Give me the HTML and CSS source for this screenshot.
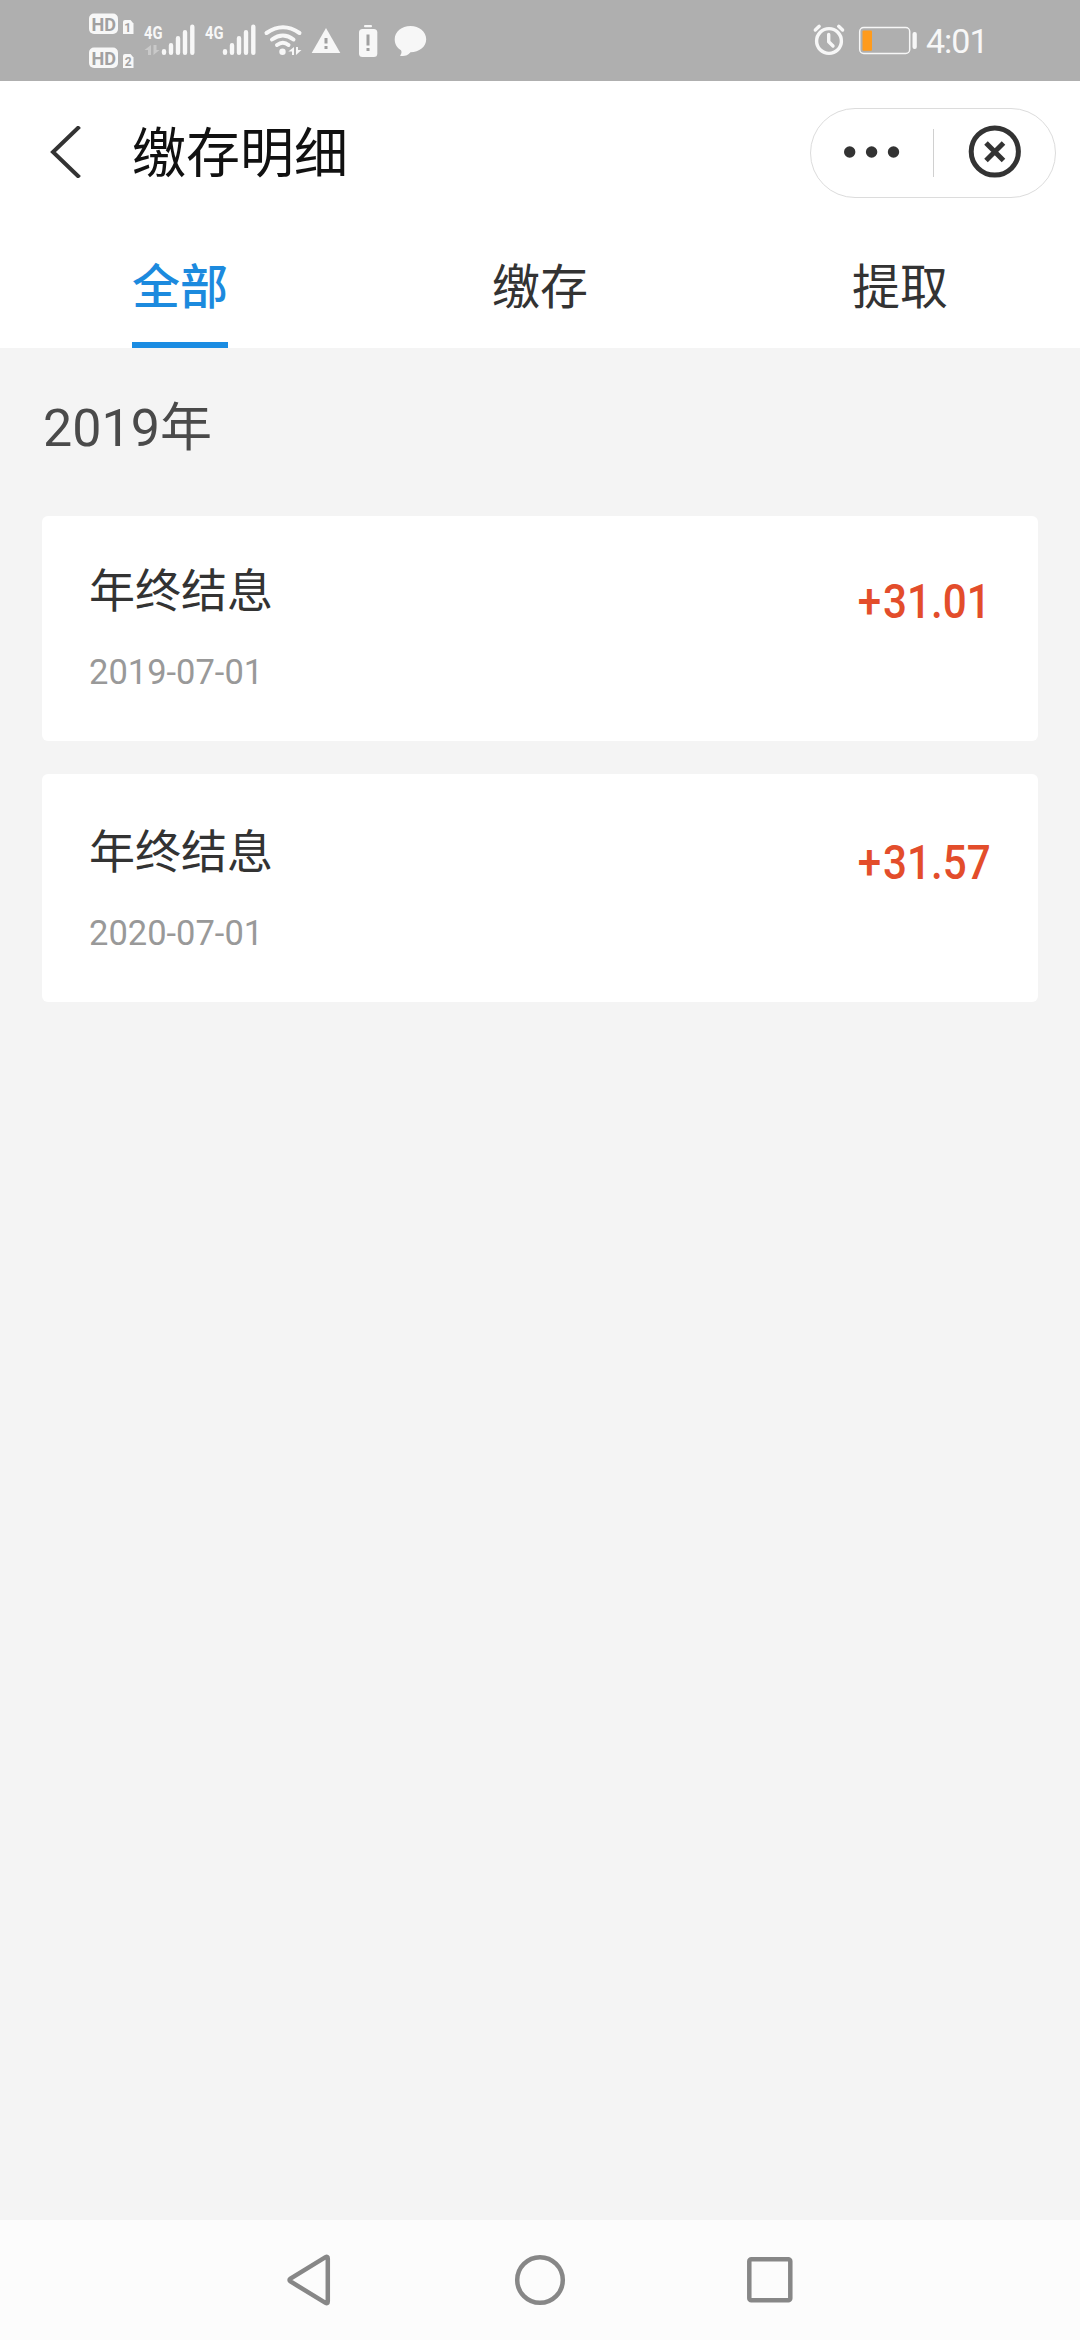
FILE: index.html
```html
<!DOCTYPE html>
<html lang="zh-CN">
<head>
<meta charset="utf-8">
<title>缴存明细</title>
<link rel="stylesheet" href="styles.css">
</head>
<body>
<div class="screen">
  <div class="status">
    <svg class="status-left" width="360" height="81" viewBox="80 0 360 81">
      <g class="light">
        <rect x="89" y="13.5" width="29" height="20.5" rx="5"/>
        <path d="M125 20h5.500l3 3.500v10.500h-10.500v-12q0-2 2-2z"/>
        <rect x="89" y="47.500" width="29" height="20.500" rx="5"/>
        <path d="M125 54h5.500l3 3.500v10.500h-10.500v-12q0-2 2-2z"/>
      </g>
      <g class="cut">
        <text x="91.500" y="30.500" font-size="19" textLength="24.500" lengthAdjust="spacingAndGlyphs">HD</text>
        <text x="91.500" y="64.500" font-size="19" textLength="24.500" lengthAdjust="spacingAndGlyphs">HD</text>
        <text x="124.300" y="31.800" font-size="12">1</text>
        <text x="124.800" y="65.800" font-size="12">2</text>
      </g>
      <g class="light network">
        <text x="144" y="38.500" font-size="19" textLength="18.500" lengthAdjust="spacingAndGlyphs">4G</text>
        <text x="205" y="38.500" font-size="19" textLength="18.500" lengthAdjust="spacingAndGlyphs">4G</text>
      </g>
      <path class="faint" d="M151 45v10h-3v-5h-3.500zM153.500 45v10l6-5h-3v-5z"/>
      <path class="bars" d="M164 51.200v1.600M171 45.200v7.600M178 38.200v14.600M185 32.200v20.600M192.300 26.800v26"/>
      <path class="bars" d="M225 51.200v1.600M232 45.200v7.600M239 38.200v14.600M246 32.200v20.600M253.300 26.800v26"/>
      <path class="waves" d="M266.500 33Q283 21.500 299.500 33M272 39.500Q283 31.500 293.500 39.500M277 45Q283 40.500 288.500 45"/>
      <g class="light">
        <circle cx="282.500" cy="51.700" r="3.200"/>
        <path d="M294 47v8h-2v-3.500h-3.700zM296 47h2v3h3.500l-5.500 5z"/>
        <path d="M326 28l14.300 25h-28.600z"/>
        <rect x="364" y="25" width="8" height="2.200" rx="1"/>
        <rect x="359" y="29" width="18.300" height="28" rx="3.500"/>
        <path d="M410.500 26c8.700 0 15.700 5.800 15.700 13.300s-7 13-15.700 13c-3 4-7 4-10.500 3.500 1.500-2 2-3.500 1-5.500-4-2.500-6.300-6-6.300-11 0-7.500 7-13.300 15.800-13.300z"/>
      </g>
      <path class="marks" d="M326 38v5.500M326 46v3M368 34.500v11M368 48v3"/>
    </svg>
    <div class="status-right">
      <svg width="108" height="81" viewBox="812 0 108 81">
        <circle cx="829" cy="41" r="12.400" class="line alarm"/>
        <path class="line alarm" d="M828.700 34.500v7.200l4.300 4.300M815.300 30l3.900-3.700M842.600 30l-3.900-3.700"/>
        <rect class="line shell" x="859.700" y="27.500" width="50" height="26" rx="4"/>
        <rect class="charge" x="862.500" y="30.500" width="9.500" height="20.300" rx="1"/>
        <rect class="light" x="912.500" y="32" width="4.300" height="17" rx="2"/>
      </svg>
      <span class="time">4:01</span>
    </div>
  </div>

  <header class="bar">
    <svg class="back" width="32" height="52" viewBox="0 0 32 52"><path d="M30.500 0.500L4 26 30.500 51.500"/></svg>
    <h1 class="title">缴存明细</h1>
    <div class="capsule">
      <svg class="more" width="122" height="88" viewBox="811 109 122 88"><circle cx="849.700" cy="152" r="5.700"/><circle cx="871.600" cy="152" r="5.700"/><circle cx="893.500" cy="152" r="5.700"/></svg>
      <span class="divider"></span>
      <svg class="close" width="121" height="88" viewBox="934 109 121 88"><circle cx="994.800" cy="151.500" r="23.600"/><path d="M986 143l17.500 17.500M1003.500 143L986 160.500"/></svg>
    </div>
  </header>

  <nav class="tabs">
    <a class="tab active">全部</a>
    <a class="tab">缴存</a>
    <a class="tab">提取</a>
  </nav>

  <main class="content">
    <h2 class="year">2019年</h2>
    <section class="card">
      <div>
        <div class="name">年终结息</div>
        <div class="date">2019-07-01</div>
      </div>
      <div class="amount"><span class="sign">+</span>31.01</div>
    </section>
    <section class="card second">
      <div>
        <div class="name">年终结息</div>
        <div class="date">2020-07-01</div>
      </div>
      <div class="amount"><span class="sign">+</span>31.57</div>
    </section>
  </main>

  <footer class="keys">
    <svg width="52" height="52" viewBox="0 0 52 52"><path d="M40.500 3.200Q42.800 2 42.800 4.500v43Q42.800 50 40.500 48.800L5.500 27.500Q3.500 26 5.500 24.500z"/></svg>
    <svg width="52" height="52" viewBox="0 0 52 52"><circle cx="26" cy="26" r="22.800"/></svg>
    <svg width="52" height="52" viewBox="0 0 52 52"><rect x="5.300" y="5.300" width="41" height="41" rx="2"/></svg>
  </footer>
</div>
</body>
</html>
```
FILE: styles.css
```css
* { box-sizing: border-box; }

body {
  margin: 0;
  font-family: Roboto, "Noto Sans CJK SC", sans-serif;
  background: #f4f4f4;
}

svg { display: block; }

h1, h2 { margin: 0; font-weight: 400; }

.screen {
  width: 1080px;
  height: 2340px;
  display: flex;
  flex-direction: column;
  overflow: hidden;
}

.status {
  height: 81px;
  padding: 0 92px 0 80px;
  display: flex;
  justify-content: space-between;
  background: #afafaf;
}

.status-right { display: flex; width: 176px; }

.time {
  padding-left: 6px;
  font-size: 34px;
  line-height: 82px;
  letter-spacing: -1px;
  color: #f7f7f7;
}

.light { fill: #f7f7f7; }
.faint { fill: #c9c9c9; }
.charge { fill: #ff9b1c; }
.cut { fill: #a0a0a0; font-weight: 700; }
.network { font-weight: 700; }
.bars { fill: none; stroke: #f7f7f7; stroke-width: 4.400; stroke-linecap: round; }
.waves { fill: none; stroke: #f7f7f7; stroke-width: 4; stroke-linecap: round; }
.marks { fill: none; stroke: #a0a0a0; stroke-width: 3; }
.line { fill: none; stroke: #f7f7f7; stroke-linecap: round; stroke-linejoin: round; }
.alarm { stroke-width: 3.400; }
.shell { stroke-width: 1.500; }

.bar {
  height: 142px;
  padding: 0 24px 0 49px;
  display: flex;
  align-items: center;
  background: #fff;
}

.back path { fill: none; stroke: #333; stroke-width: 4; }

.title {
  margin-left: 51px;
  flex: 1;
  font-size: 54px;
  line-height: 80px;
  padding-top: 5px;
  color: #111;
}

.capsule {
  width: 246px;
  height: 90px;
  display: flex;
  align-items: center;
  border: 1px solid #dcdcdc;
  border-radius: 45px;
  margin-top: 2px;
}

.divider { width: 1px; height: 48px; background: #d0d0d0; }
.more { fill: #333; }
.close { fill: none; stroke: #333; stroke-width: 5; }

.tabs {
  height: 125px;
  display: grid;
  grid-template-columns: repeat(3, 1fr);
  justify-items: center;
  background: #fff;
}

.tab {
  height: 125px;
  padding-top: 29px;
  font-size: 48px;
  line-height: 72px;
  color: #333;
}

.tab.active {
  color: #1c8ade;
  font-weight: 500;
  border-bottom: 6px solid #1a8ce2;
}

.content { flex: 1; padding: 0 42px; }

.year {
  height: 168px;
  padding-left: 1px;
  font-size: 52px;
  line-height: 162px;
  color: #4a4a4a;
}

.card {
  height: 225px;
  padding: 45px 47px 0;
  display: flex;
  justify-content: space-between;
  border-radius: 6px;
  background: #fff;
}

.card.second { height: 228px; margin-top: 33px; padding-top: 48px; }

.name { font-size: 46px; line-height: 60px; color: #333; }

.date {
  margin-top: 29px;
  font-size: 34.500px;
  line-height: 44px;
  color: #999;
}

.amount {
  font-size: 48.500px;
  line-height: 81px;
  font-weight: 500;
  color: #e34d2b;
  transform: scaleX(0.870);
  transform-origin: right;
}

.sign { margin-right: 2px; }

.keys {
  height: 120px;
  display: grid;
  grid-template-columns: repeat(3, 229.500px);
  justify-content: center;
  align-items: center;
  justify-items: center;
  background: #fcfcfc;
}

.keys svg { fill: none; stroke: #878787; stroke-width: 4.500; }
```
